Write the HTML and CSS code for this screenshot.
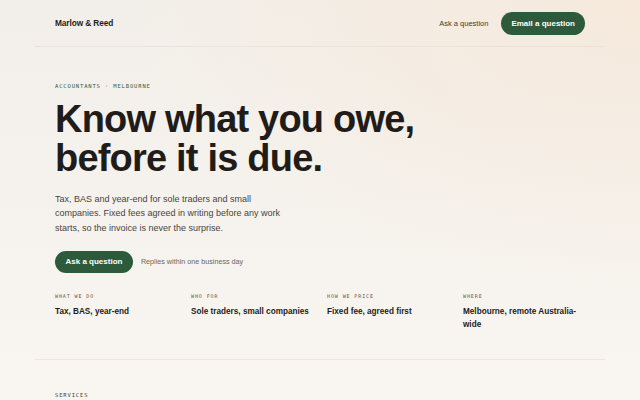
FILE: index.html
```html
<!DOCTYPE html>
<html lang="en">
<head>
<meta charset="utf-8">
<title>Marlow &amp; Reed</title>
<link rel="stylesheet" href="styles.css">
</head>
<body>
<div class="page">
  <header class="header">
    <div class="brand">Marlow &amp; Reed</div>
    <nav class="nav">
      <a class="nav-link" href="#">Ask a question</a>
      <a class="btn btn-nav" href="#">Email a question</a>
    </nav>
  </header>
  <section class="hero">
    <div class="eyebrow">ACCOUNTANTS · MELBOURNE</div>
    <h1 class="title">Know what you owe,<br>before it is due.</h1>
    <p class="lede">Tax, BAS and year-end for sole traders and small companies. Fixed fees agreed in writing before any work starts, so the invoice is never the surprise.</p>
    <div class="cta">
      <a class="btn btn-main" href="#">Ask a question</a>
      <span class="cta-note">Replies within one business day</span>
    </div>
    <div class="facts">
      <div class="fact"><div class="fact-label">WHAT WE DO</div><div class="fact-value">Tax, BAS, year-end</div></div>
      <div class="fact"><div class="fact-label">WHO FOR</div><div class="fact-value">Sole traders, small companies</div></div>
      <div class="fact"><div class="fact-label">HOW WE PRICE</div><div class="fact-value">Fixed fee, agreed first</div></div>
      <div class="fact"><div class="fact-label">WHERE</div><div class="fact-value">Melbourne, remote Australia-wide</div></div>
    </div>
  </section>
  <section class="services">
    <div class="eyebrow eyebrow-dark">SERVICES</div>
  </section>
</div>
</body>
</html>
```
FILE: styles.css
```css
html, body {
  margin: 0;
  padding: 0;
}
body {
  font-family: "Liberation Sans", Arial, sans-serif;
  color: #1f1c19;
  background: radial-gradient(ellipse 520px 300px at 640px 0, #f6e9dc 0%, rgba(246,233,220,0) 100%), linear-gradient(180deg, #f2efea 0%, #f9f6f1 100%);
  min-height: 400px;
  overflow: hidden;
}
.page {
  width: 570px;
  margin: 0 auto;
}
.header {
  height: 47px;
  box-sizing: border-box;
  display: flex;
  align-items: center;
  justify-content: space-between;
  padding: 0 20px;
  border-bottom: 1px solid #e9e3da;
}
.brand {
  font-size: 8.3px;
  font-weight: 700;
  letter-spacing: -0.1px;
}
.nav {
  display: flex;
  align-items: center;
  gap: 13px;
}
.nav-link {
  font-size: 7.5px;
  color: #3f3a35;
  text-decoration: none;
}
.btn {
  display: inline-flex;
  align-items: center;
  justify-content: center;
  background: #2c5a3b;
  color: #fff;
  font-weight: 700;
  text-decoration: none;
  border-radius: 12px;
}
.btn-nav {
  height: 23px;
  padding: 0 10px;
  font-size: 8px;
}
.hero {
  padding: 35px 20px 28px;
  border-bottom: 1px solid #ece6dc;
}
.eyebrow {
  font-family: "DejaVu Sans Mono", "Liberation Mono", monospace;
  font-size: 5.5px;
  letter-spacing: 0.85px;
  color: #2c5a3b;
  line-height: 8px;
}
.eyebrow-dark {
  color: #3f3a35;
}
.title {
  margin: 9.5px 0 0;
  font-size: 38px;
  line-height: 39px;
  font-weight: 700;
  letter-spacing: -0.8px;
  color: #1f1c19;
}
.lede {
  margin: 14px 0 0;
  width: 241px;
  font-size: 9px;
  line-height: 14.5px;
  color: #48433e;
}
.cta {
  margin-top: 15.5px;
  display: flex;
  align-items: center;
  gap: 8px;
}
.btn-main {
  height: 22px;
  padding: 0 10.5px;
  font-size: 8px;
}
.cta-note {
  font-size: 7.2px;
  color: #6b655e;
}
.facts {
  margin-top: 19px;
  display: grid;
  grid-template-columns: repeat(4, 1fr);
  gap: 14px;
}
.fact-label {
  font-family: "DejaVu Sans Mono", "Liberation Mono", monospace;
  font-size: 5px;
  letter-spacing: 0.9px;
  color: #5d5750;
  line-height: 8px;
}
.fact-value {
  margin-top: 5px;
  font-size: 8.2px;
  line-height: 13px;
  font-weight: 700;
  color: #1f1c19;
}
.services {
  padding: 31px 20px 0;
}
```
